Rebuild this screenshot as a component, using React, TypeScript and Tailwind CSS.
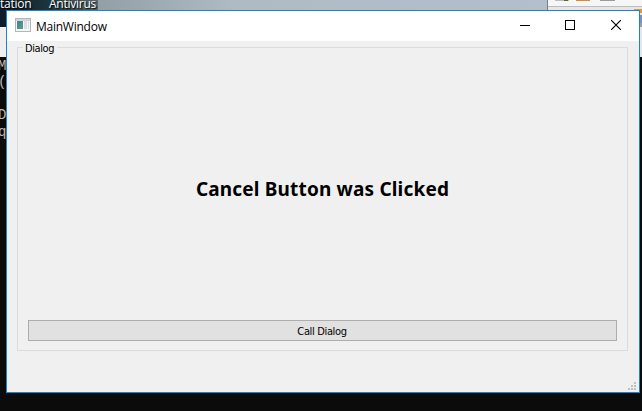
function DesktopBackdrop() {
  return (
    <div className="absolute inset-0 overflow-hidden bg-[#0b0b0b]">
      <div className="flex h-[27px] w-full bg-[#b4c1cd]">
        <div className="h-full w-[98px] bg-gradient-to-r from-[#0d1c28] via-[#1d3540] to-[#56696f]" />
        <div className="h-full grow bg-gradient-to-r from-[#929fa6] via-[#aebbc5] via-25% to-[#b4c1cd]" />
      </div>
      <div className="h-[30px] w-full bg-[#efefef]" />
      <span className="absolute top-[-5px] left-0 font-['Open_Sans',sans-serif] text-[12px] leading-[17px] tracking-[-0.25px] text-white [text-shadow:1px_1px_1px_#000]">tation</span>
      <span className="absolute top-[-5px] left-[49px] font-['Open_Sans',sans-serif] text-[12px] leading-[17px] tracking-[-0.25px] text-white [text-shadow:1px_1px_1px_#000]">Antivirus</span>
      <div className="absolute top-0 left-[547px] h-[57px] w-[95px] border-l border-[#777d83] bg-[#e6e6e6]">
        <div className="h-[7px] border-b border-[#bcbcbc] bg-[#f6f6f6]" />
        <div className="absolute top-0 left-[7px] h-px w-[14px] bg-[#b9bdb5]" />
        <div className="absolute top-0 left-[16px] h-px w-[4px] bg-[#3c7a1e]" />
        <div className="absolute top-0 left-[28px] h-px w-[14px] bg-[#d98a35]" />
        <div className="absolute top-0 left-[52px] h-px w-[15px] bg-[#9a9a9a]" />
        <div className="absolute top-[9px] right-0 h-[4px] w-[8px] bg-[#dd9a3c]" />
        <div className="absolute top-[15px] right-0 h-[8px] w-[2px] bg-[#7b90bd]" />
        <div className="absolute top-[23px] right-0 h-[4px] w-[2px] bg-[#9a9d98]" />
      </div>
      <div className="absolute top-[58px] left-0 font-['Liberation_Mono',monospace] text-[14px] leading-[16.4px] text-[#b8b8b8]">
        <div className="-ml-[2px]">M</div>
        <div className="-ml-[2px]">(</div>
        <div>&nbsp;</div>
        <div className="-ml-[2px]">D</div>
        <div className="-ml-[2px]">q</div>
      </div>
    </div>
  );
}

function TitleBar() {
  return (
    <header className="flex h-[30px] shrink-0 items-center bg-white pl-2">
      <svg className="-mt-[2px]" width="16" height="14" viewBox="0 0 16 14" shapeRendering="crispEdges">
        <defs>
          <linearGradient id="pane" x1="0" y1="0" x2="1" y2="1">
            <stop offset="0" stopColor="#4a78a8" />
            <stop offset="1" stopColor="#54a878" />
          </linearGradient>
        </defs>
        <rect x=".5" y=".5" width="15" height="13" fill="#f7f7f7" stroke="#b3b6b9" />
        <rect x="1" y="1" width="14" height="2" fill="#d3d6d9" />
        <rect x="2" y="3" width="6" height="8" fill="url(#pane)" />
        <rect x="9" y="3" width="3" height="8" fill="#d9dfe4" />
        <rect x="13" y="3" width="1" height="8" fill="#d9dfe4" />
      </svg>
      <span className="ml-[5px] pt-[1px] font-['Open_Sans',sans-serif] text-[12px] leading-4 tracking-[-0.25px] text-black">MainWindow</span>
      <div className="ml-auto flex h-full">
        <button aria-label="Minimize" className="flex w-[45px] items-center justify-center">
          <svg width="10" height="10" shapeRendering="crispEdges"><path d="M0 4.5h10" stroke="#000" /></svg>
        </button>
        <button aria-label="Maximize" className="flex w-[46px] items-center justify-center pb-[2px]">
          <svg width="10" height="10" shapeRendering="crispEdges"><rect x=".5" y=".5" width="9" height="9" fill="none" stroke="#000" /></svg>
        </button>
        <button aria-label="Close" className="flex w-[46px] items-center justify-center pb-[2px]">
          <svg width="10" height="10"><path d="M0 0l10 10M10 0L0 10" stroke="#000" strokeWidth="1.15" /></svg>
        </button>
      </div>
    </header>
  );
}

function SizeGrip() {
  return (
    <svg className="mr-[3px] mb-[2px]" width="8" height="8" fill="#bfbfbf" shapeRendering="crispEdges">
      <path d="M6 0h2v2h-2zM3 3h2v2h-2zM6 3h2v2h-2zM0 6h2v2h-2zM3 6h2v2h-2zM6 6h2v2h-2z" />
    </svg>
  );
}

export default function App() {
  return (
    <div className="relative h-[411px] w-[642px] overflow-hidden">
      <DesktopBackdrop />
      <main className="absolute top-[10px] left-[6px] flex h-[383px] w-[634px] flex-col border border-[#1883d7] bg-[#f0f0f0]">
        <TitleBar />
        <section className="mx-[10px] mt-[6px] flex h-[304px] w-[611px] shrink-0 flex-col border border-[#dcdcdc]">
          <h2 className="-mt-[7px] ml-[5px] h-[15px] w-[34px] bg-[#f0f0f0] pt-[1px] pl-[2px] font-['DejaVu_Sans_Condensed','DejaVu_Sans',sans-serif] text-[11px] leading-[14px] tracking-[-0.4px] text-black">Dialog</h2>
          <div className="flex grow items-center justify-center pt-[3px] font-['Noto_Sans',sans-serif] text-[19px] font-bold tracking-[0.17px] whitespace-nowrap text-black">Cancel Button was Clicked</div>
          <button className="mx-[10px] mb-[9px] flex h-[21px] shrink-0 items-center justify-center border border-[#adadad] bg-[#e1e1e1] pt-[2px] pr-[1px] font-['DejaVu_Sans_Condensed','DejaVu_Sans',sans-serif] text-[11px] leading-[14px] tracking-[-0.35px] text-black">Call Dialog</button>
        </section>
        <footer className="flex grow items-end justify-end">
          <SizeGrip />
        </footer>
      </main>
    </div>
  );
}
